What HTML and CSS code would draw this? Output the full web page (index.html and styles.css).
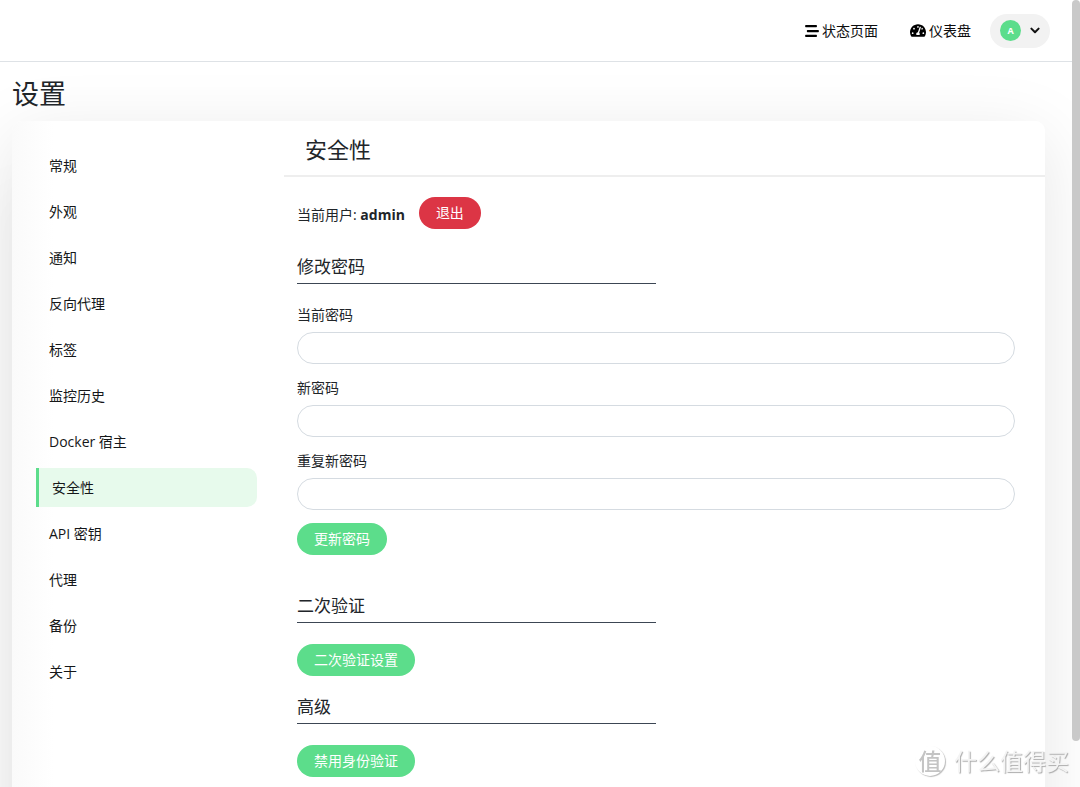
FILE: index.html
```html
<!DOCTYPE html>
<html lang="zh-CN">
<head>
<meta charset="utf-8">
<title>设置</title>
<link rel="stylesheet" href="styles.css">
</head>
<body>
<header class="topbar">
  <nav class="nav">
    <a class="nav-link" href="#status">
      <svg class="icon-stream" viewBox="0 0 512 448" aria-hidden="true"><path d="M24 0h392a24 24 0 0 1 24 24v36a24 24 0 0 1-24 24H24A24 24 0 0 1 0 60V24a24 24 0 0 1 24-24zM88 182h400a24 24 0 0 1 24 24v36a24 24 0 0 1-24 24H88a24 24 0 0 1-24-24v-36a24 24 0 0 1 24-24zM24 364h392a24 24 0 0 1 24 24v36a24 24 0 0 1-24 24H24a24 24 0 0 1-24-24v-36a24 24 0 0 1 24-24z"/></svg>
      <span>状态页面</span>
    </a>
    <a class="nav-link" href="#dashboard">
      <svg class="icon-gauge" viewBox="0 32 576 448" aria-hidden="true"><path d="M288 32C128.940 32 0 160.940 0 320c0 52.800 14.250 102.260 39.060 144.800 5.610 9.620 16.300 15.200 27.440 15.200h443c11.140 0 21.830-5.580 27.440-15.200C561.750 422.260 576 372.800 576 320c0-159.060-128.940-288-288-288zm0 64c14.710 0 26.580 10.130 30.320 23.650-1.110 2.260-2.640 4.230-3.450 6.670l-9.220 27.670c-5.130 3.490-10.970 6.010-17.640 6.010-17.670 0-32-14.330-32-32S270.330 96 288 96zM96 384c-17.670 0-32-14.330-32-32s14.330-32 32-32 32 14.330 32 32-14.330 32-32 32zm48-160c-17.670 0-32-14.330-32-32s14.330-32 32-32 32 14.330 32 32-14.330 32-32 32zm246.770-72.410l-61.330 184C343.130 347.330 352 364.540 352 384c0 11.720-3.380 22.550-8.880 32H232.880c-5.500-9.450-8.880-20.280-8.880-32 0-33.940 26.500-61.430 59.900-63.590l61.340-184.010c4.170-12.560 17.730-19.450 30.360-15.170 12.570 4.190 19.350 17.790 15.170 30.360zm14.660 57.200l15.520-46.550c3.470-1.290 7.130-2.230 11.050-2.230 17.670 0 32 14.330 32 32s-14.330 32-32 32c-11.380-.010-20.890-6.280-26.570-15.220zM480 384c-17.670 0-32-14.330-32-32s14.330-32 32-32 32 14.330 32 32-14.330 32-32 32z"/></svg>
      <span>仪表盘</span>
    </a>
    <button class="profile" type="button" aria-label="账户菜单">
      <span class="avatar">A</span>
      <svg class="icon-chevron" viewBox="0 0 10 7" aria-hidden="true"><path d="M1.400 1.600L5 5.200l3.600-3.600"/></svg>
    </button>
  </nav>
</header>

<main class="page">
  <h1 class="page-title">设置</h1>
  <div class="card">
    <nav class="menu">
      <a class="menu-item" href="#general">常规</a>
      <a class="menu-item" href="#appearance">外观</a>
      <a class="menu-item" href="#notifications">通知</a>
      <a class="menu-item" href="#reverse-proxy">反向代理</a>
      <a class="menu-item" href="#tags">标签</a>
      <a class="menu-item" href="#history">监控历史</a>
      <a class="menu-item" href="#docker">Docker 宿主</a>
      <a class="menu-item active" href="#security" aria-current="page">安全性</a>
      <a class="menu-item" href="#api-keys">API 密钥</a>
      <a class="menu-item" href="#proxies">代理</a>
      <a class="menu-item" href="#backup">备份</a>
      <a class="menu-item" href="#about">关于</a>
    </nav>
    <section class="content">
      <h2 class="content-title">安全性</h2>
      <div class="content-body">
        <div class="user-row">
          <p class="user">当前用户: <strong>admin</strong></p>
          <button class="btn btn-danger" type="button">退出</button>
        </div>
        <h3 class="section-title">修改密码</h3>
        <form class="form">
          <div class="field">
            <label for="current-password">当前密码</label>
            <input id="current-password" type="password">
          </div>
          <div class="field">
            <label for="new-password">新密码</label>
            <input id="new-password" type="password">
          </div>
          <div class="field">
            <label for="repeat-password">重复新密码</label>
            <input id="repeat-password" type="password">
          </div>
          <button class="btn" type="button">更新密码</button>
        </form>
        <h3 class="section-title section-spaced">二次验证</h3>
        <button class="btn" type="button">二次验证设置</button>
        <h3 class="section-title">高级</h3>
        <button class="btn" type="button">禁用身份验证</button>
      </div>
    </section>
  </div>
</main>

<div class="scroll-thumb"></div>
<div class="watermark"><span class="watermark-logo">值</span><span>什么值得买</span></div>
</body>
</html>
```
FILE: styles.css
```css
* { box-sizing: border-box; }

body {
  margin: 0;
  height: 100vh;
  overflow: hidden;
  padding-right: 8px;
  background: #fff;
  color: #212529;
  font: 14px/20px "Open Sans", "Noto Sans CJK SC", sans-serif;
}

h1, h2, h3, p { margin: 0; font-weight: 400; }
a { color: inherit; text-decoration: none; }
button, input { font: inherit; }

.topbar {
  height: 62px;
  padding: 0 22px;
  border-bottom: 1px solid #dee2e6;
  display: flex;
  align-items: center;
  justify-content: flex-end;
}
.nav { display: flex; align-items: center; }
.nav-link {
  display: flex;
  align-items: center;
  gap: 3px;
  margin-right: 32px;
  color: #0c0c0d;
}
.nav-link + .nav-link { margin-right: 19px; }
.icon-stream { width: 14px; height: 12px; }
.icon-gauge { width: 16px; height: 13px; }

.profile {
  display: flex;
  align-items: center;
  gap: 9px;
  height: 34px;
  padding: 0 10px;
  border: 0;
  border-radius: 17px;
  background: #f2f2f2;
}
.avatar {
  width: 21px;
  height: 21px;
  border-radius: 50%;
  background: #5cdd8b;
  color: #fff;
  font-size: 9px;
  font-weight: 700;
  line-height: 21px;
}
.icon-chevron {
  width: 10px;
  height: 7px;
  fill: none;
  stroke: #111;
  stroke-width: 2;
  stroke-linecap: round;
  stroke-linejoin: round;
}

.page { padding: 15px 27px 0 12px; }
.page-title {
  margin-bottom: 10px;
  font-size: 27px;
  line-height: 34px;
}

.card {
  display: grid;
  grid-template-columns: 272px 1fr;
  min-height: 740px;
  border-radius: 10px;
  background: linear-gradient(90deg, #fafafa, #fff 42px);
  box-shadow: 0 15px 70px rgba(0, 0, 0, .1), -30px 50px 50px -20px rgba(0, 0, 0, .04);
}

.menu {
  display: flex;
  flex-direction: column;
  gap: 7px;
  padding: 25px 27px 0 24px;
}
.menu-item {
  padding: 10px 13px 9px;
  border-radius: 0 10px 10px 0;
  color: #151719;
}
.menu-item.active {
  border-left: 3px solid #5cdd8b;
  background: #e7faec;
}

.content-title {
  padding: 13px 21px 11px;
  border-bottom: 2px solid #eee;
  font-size: 22px;
  line-height: 30px;
}
.content-body { padding: 20px 30px 30px 13px; }

.user-row { display: flex; align-items: center; gap: 14px; }
.user { padding-top: 3px; }
.user strong { font-weight: 700; }

.btn {
  height: 32px;
  padding: 0 17px;
  border: 0;
  border-radius: 16px;
  background: #5cdd8b;
  color: #fff;
}
.btn-danger { background: #dc3545; }

.section-title {
  width: 50%;
  margin: 21px 0;
  padding-bottom: 6px;
  border-bottom: 1px solid #3c4654;
  font-size: 17px;
  line-height: 20px;
}
.user-row + .section-title { margin-top: 28px; }
.section-spaced { margin-top: 41px; }

.field + .field { margin-top: 14px; }
.field + .btn { margin-top: 13px; }
.field label { display: block; margin-bottom: 7px; }
.field input {
  display: block;
  width: 100%;
  height: 32px;
  padding: 0 12px;
  border: 1px solid #d5dbe1;
  border-radius: 16px;
  background: #fff;
}

.scroll-thumb {
  position: fixed;
  top: 0;
  right: 0;
  width: 8px;
  height: 741px;
  border-radius: 4px;
  background: #c9c9c9;
}

.watermark {
  position: fixed;
  right: 11px;
  bottom: 11px;
  display: flex;
  align-items: center;
  gap: 9px;
  color: #f4f4f4;
  font-size: 23px;
  line-height: 30px;
  text-shadow: 1px 1px 1px #aaa;
}
.watermark-logo {
  width: 30px;
  height: 30px;
  border-radius: 50%;
  box-shadow: 1px 1px 1px #bbb;
  color: #c4c4c4;
  font-weight: 500;
  text-align: center;
  text-shadow: none;
}
```
